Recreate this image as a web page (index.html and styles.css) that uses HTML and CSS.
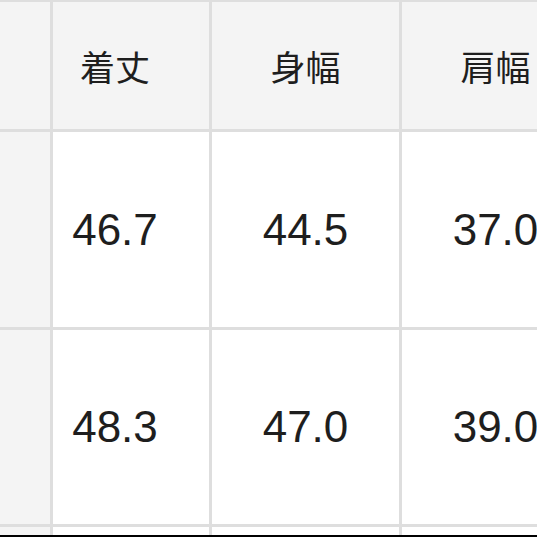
FILE: index.html
```html
<!DOCTYPE html>
<html lang="ja">
<head>
<meta charset="utf-8">
<link rel="stylesheet" href="styles.css">
</head>
<body>
<div class="frame">
  <div class="size-table">
    <div class="cell head label"></div>
    <div class="cell head first">着丈</div>
    <div class="cell head">身幅</div>
    <div class="cell head">肩幅</div>

    <div class="cell label"></div>
    <div class="cell num first">46.7</div>
    <div class="cell num">44.5</div>
    <div class="cell num">37.0</div>

    <div class="cell label"></div>
    <div class="cell num first">48.3</div>
    <div class="cell num">47.0</div>
    <div class="cell num">39.0</div>

    <div class="cell label"></div>
    <div class="cell num first"></div>
    <div class="cell num"></div>
    <div class="cell num"></div>
  </div>
</div>
</body>
</html>
```

FILE: styles.css
```css
html, body {
  margin: 0;
  padding: 0;
  background: #000;
}
body {
  width: 537px;
  height: 537px;
  overflow: hidden;
}
.frame {
  width: 537px;
  height: 535px;
  overflow: hidden;
  background: #dedede;
  padding-top: 2px;
  box-sizing: border-box;
}
.size-table {
  display: grid;
  grid-template-columns: 50px 156px 187px 187px;
  grid-template-rows: 127px 195px 194px 60px;
  gap: 3px;
  background: #dedede;
  width: 589px;
}
.cell {
  display: flex;
  align-items: center;
  justify-content: center;
  background: #fff;
  color: #1e1e1e;
}
.head {
  background: #f4f4f4;
  font-family: "Noto Sans CJK JP", "Noto Sans", sans-serif;
  font-size: 35px;
  letter-spacing: 0;
}
.label {
  background: #f4f4f4;
}
.num {
  font-family: "Liberation Sans", Arial, sans-serif;
  font-size: 44px;
}
.first {
  padding-right: 32px;
}
```
